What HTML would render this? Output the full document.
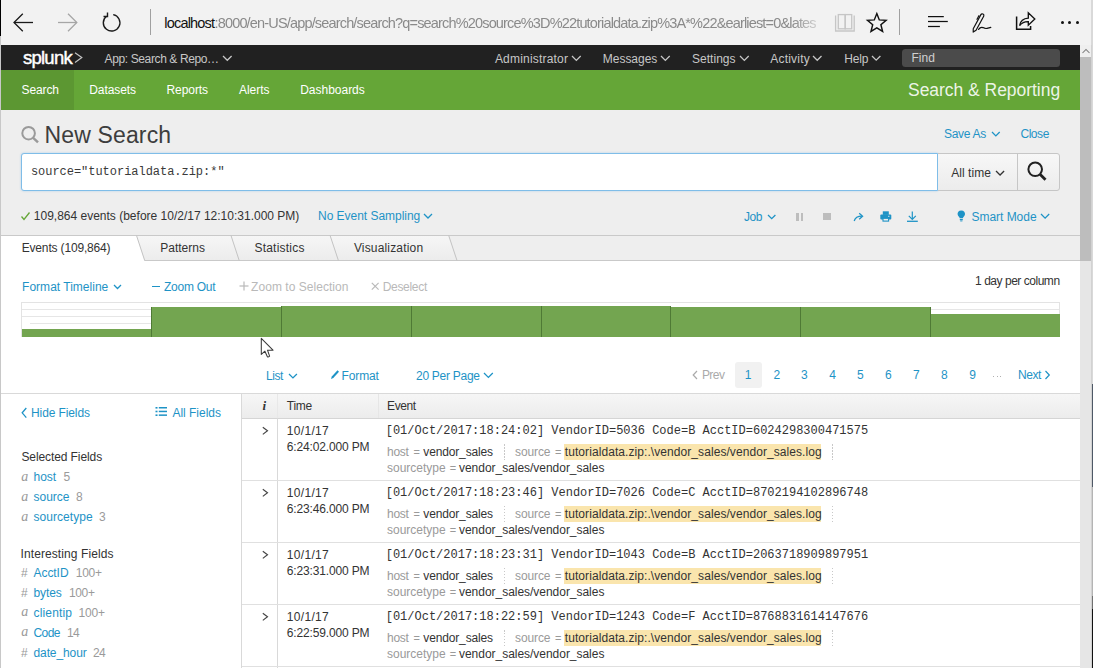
<!DOCTYPE html>
<html><head><meta charset="utf-8">
<style>
*{box-sizing:border-box;margin:0;padding:0}
html,body{width:1093px;height:668px;overflow:hidden;background:#ffffff;font-family:"Liberation Sans",sans-serif;position:relative}
.a{position:absolute}
.t{white-space:nowrap;line-height:normal}
svg.a{overflow:visible}
</style></head><body>
<div class="a" style="left:0px;top:0px;width:1093px;height:45px;background:#f2f2f2"></div>
<div class="a" style="left:0px;top:0px;width:1px;height:36px;background:#000"></div>
<div class="a" style="left:1091px;top:0px;width:2px;height:668px;background:#d9d9d9"></div>
<div class="a" style="left:0px;top:45px;width:1080px;height:25px;background:#212121"></div>
<div class="a" style="left:0px;top:70px;width:1080px;height:40px;background:#65a637"></div>
<div class="a" style="left:0px;top:70px;width:74px;height:40px;background:#5c9732"></div>
<div class="a" style="left:0px;top:110px;width:1080px;height:126px;background:#eeeeee"></div>
<div class="a" style="left:1080px;top:45px;width:11px;height:623px;background:#e6e6e6"></div>
<div class="a" style="left:1080px;top:45px;width:11px;height:12px;background:#efefef"></div>
<div class="a" style="left:1080px;top:57px;width:11px;height:204px;background:#bdbdbd"></div>
<div class="a" style="left:1091px;top:45px;width:1px;height:623px;background:#d2d2d2"></div>
<div class="a" style="left:1092px;top:384px;width:1px;height:103px;background:#4e5866"></div>
<div class="a" style="left:1092px;top:487px;width:1px;height:109px;background:#b4b4b4"></div>
<div class="a" style="left:1092px;top:596px;width:1px;height:13px;background:#707070"></div>
<div class="a" style="left:1092px;top:609px;width:1px;height:59px;background:#111"></div>
<svg class="a" style="left:1081px;top:47px" width="10" height="8"><polyline points="1.5,6 5,2.5 8.5,6" fill="none" stroke="#7a7a7a" stroke-width="1.05"/></svg>
<div class="a" style="left:150px;top:9px;width:1px;height:26px;background:#a0a0a0"></div>
<div class="a" style="left:899px;top:9px;width:1px;height:26px;background:#a0a0a0"></div>
<svg class="a" style="left:12px;top:12px" width="24" height="22"><polyline points="10.8,1.8 2,10.5 10.8,19.2" fill="none" stroke="#1a1a1a" stroke-width="1.3"/><line x1="2" y1="10.5" x2="21" y2="10.5" stroke="#1a1a1a" stroke-width="1.3"/></svg>
<svg class="a" style="left:56px;top:12px" width="24" height="22"><polyline points="12,1.8 20.8,10.5 12,19.2" fill="none" stroke="#a6a6a6" stroke-width="1.3"/><line x1="2" y1="10.5" x2="20.8" y2="10.5" stroke="#a6a6a6" stroke-width="1.3"/></svg>
<svg class="a" style="left:98.5px;top:11px" width="24" height="24"><path d="M 7.5 5.2 A 8.3 8.3 0 1 0 14.2 3.6" fill="none" stroke="#1a1a1a" stroke-width="1.4"/><polyline points="8.5,1.5 8.5,5.5 4.5,5.5" fill="none" stroke="#1a1a1a" stroke-width="1.4"/></svg>
<svg class="a" style="left:830px;top:10px" width="30" height="25"><path d="M5.6 5.5 V21 H24.2 V5.5" fill="none" stroke="#c6c6c6" stroke-width="1.3"/><rect x="8.3" y="4.6" width="6.9" height="14.2" fill="none" stroke="#c6c6c6" stroke-width="1.3"/><rect x="15.2" y="4.6" width="6.5" height="14.2" fill="none" stroke="#c6c6c6" stroke-width="1.3"/></svg>
<svg class="a" style="left:860px;top:10px" width="30" height="25"><polygon points="16.8,3.6 19.3,9.9 26.1,10.4 20.9,14.8 22.6,21.4 16.8,17.8 11,21.4 12.7,14.8 7.5,10.4 14.3,9.9" fill="none" stroke="#111" stroke-width="1.45" stroke-linejoin="miter"/></svg>
<svg class="a" style="left:920px;top:10px" width="30" height="20"><line x1="8" y1="6.6" x2="23.8" y2="6.6" stroke="#111" stroke-width="1.25"/><line x1="8" y1="11.5" x2="27.8" y2="11.5" stroke="#111" stroke-width="1.25"/><line x1="8" y1="16.5" x2="19.9" y2="16.5" stroke="#111" stroke-width="1.25"/></svg>
<svg class="a" style="left:970px;top:10px" width="24" height="22"><g transform="rotate(-61.5 4.8 19.2)"><path d="M1.5 19.2 L4.5 17.6 H20.5 Q22 17.6 22 19.2 Q22 20.8 20.5 20.8 H4.5 Z" fill="none" stroke="#111" stroke-width="1.2" stroke-linejoin="round"/><line x1="14" y1="16.4" x2="19" y2="16.4" stroke="#111" stroke-width="1.1"/></g><path d="M8.6 19.4 Q10.5 16.6 13 17.6 Q15 18.8 17 18.4 Q19 18 20.8 17.4" fill="none" stroke="#111" stroke-width="1.2" stroke-linecap="round"/></svg>
<svg class="a" style="left:1010px;top:8px" width="28" height="24"><path d="M6.6 8.5 V21.3 H20.6 V18" fill="none" stroke="#111" stroke-width="1.5"/><path d="M9.6 17.6 Q10.8 10.6 18.3 10.2 V4.8 L24.8 11.1 L18.3 17.2 V13.6 Q12.8 13.4 9.6 17.6 Z" fill="none" stroke="#111" stroke-width="1.35" stroke-linejoin="miter"/></svg>
<div class="a" style="left:1060.8px;top:20.6px;width:3px;height:3px;border-radius:50%;background:#111"></div>
<div class="a" style="left:1068.3px;top:20.6px;width:3px;height:3px;border-radius:50%;background:#111"></div>
<div class="a" style="left:1076.0px;top:20.6px;width:3px;height:3px;border-radius:50%;background:#111"></div>
<svg class="a" style="left:73px;top:51px" width="11" height="14"><polyline points="2,1.8 8.8,6.6 2,11.6" fill="none" stroke="#c4c4c4" stroke-width="1.2"/></svg>
<svg class="a" style="left:222.0px;top:54.9px" width="10.6" height="6.3"><polyline points="1,1 5.30,5.30 9.60,1" fill="none" stroke="#c7c7c7" stroke-width="1.3"/></svg>
<svg class="a" style="left:570.5px;top:54.6px" width="10.7" height="6.4"><polyline points="1,1 5.35,5.35 9.70,1" fill="none" stroke="#c7c7c7" stroke-width="1.3"/></svg>
<svg class="a" style="left:659.7px;top:54.6px" width="10.7" height="6.3"><polyline points="1,1 5.35,5.35 9.70,1" fill="none" stroke="#c7c7c7" stroke-width="1.3"/></svg>
<svg class="a" style="left:738.5px;top:54.6px" width="10.7" height="6.4"><polyline points="1,1 5.35,5.35 9.70,1" fill="none" stroke="#c7c7c7" stroke-width="1.3"/></svg>
<svg class="a" style="left:812.3px;top:54.7px" width="10.5" height="6.2"><polyline points="1,1 5.25,5.25 9.50,1" fill="none" stroke="#c7c7c7" stroke-width="1.3"/></svg>
<svg class="a" style="left:871.0px;top:54.7px" width="10.4" height="6.2"><polyline points="1,1 5.20,5.20 9.40,1" fill="none" stroke="#c7c7c7" stroke-width="1.3"/></svg>
<div class="a" style="left:902px;top:48.5px;width:158px;height:18.5px;background:#4b4b4b;border-radius:3.5px"></div>
<svg class="a" style="left:20px;top:125px" width="21" height="20"><circle cx="8.6" cy="8.2" r="6.3" fill="none" stroke="#9a9a9a" stroke-width="2"/><line x1="13.2" y1="12.8" x2="18" y2="17.4" stroke="#9a9a9a" stroke-width="2.4"/></svg>
<svg class="a" style="left:990.6px;top:130.6px" width="9.7" height="5.8"><polyline points="1,1 4.85,4.85 8.70,1" fill="none" stroke="#1e93c6" stroke-width="1.3"/></svg>
<div class="a" style="left:21px;top:153px;width:917px;height:37.5px;background:#fff;border:1px solid #7fbde8;border-radius:3px 0 0 3px;box-shadow:0 0 2px rgba(80,160,230,.45)"></div>
<div class="a" style="left:938px;top:153px;width:80px;height:37.5px;background:linear-gradient(#f7f7f7,#ececec);border:1px solid #c6c6c6;border-left:none"></div>
<div class="a" style="left:1017px;top:153px;width:43px;height:37.5px;background:linear-gradient(#f7f7f7,#ececec);border:1px solid #c6c6c6;border-radius:0 3px 3px 0"></div>
<svg class="a" style="left:994.6px;top:169.5px" width="10.1" height="6.1"><polyline points="1,1 5.05,5.05 9.10,1" fill="none" stroke="#333333" stroke-width="1.3"/></svg>
<svg class="a" style="left:1026px;top:160px" width="23" height="23"><circle cx="9.2" cy="9.3" r="6.8" fill="none" stroke="#222" stroke-width="2"/><line x1="14" y1="14.2" x2="19.5" y2="19.8" stroke="#222" stroke-width="2.8"/></svg>
<svg class="a" style="left:20px;top:211px" width="11" height="10"><polyline points="1.5,5.5 4,8.5 9.5,1.5" fill="none" stroke="#65a637" stroke-width="1.3"/></svg>
<svg class="a" style="left:423.0px;top:213.0px" width="10.0" height="6.0"><polyline points="1,1 5.00,5.00 9.00,1" fill="none" stroke="#1e93c6" stroke-width="1.3"/></svg>
<svg class="a" style="left:767.4px;top:213.7px" width="9.4" height="5.7"><polyline points="1,1 4.70,4.70 8.40,1" fill="none" stroke="#1e93c6" stroke-width="1.3"/></svg>
<div class="a" style="left:796.3px;top:212.5px;width:2.6px;height:8px;background:#bdbdbd"></div>
<div class="a" style="left:800.5px;top:212.5px;width:2.6px;height:8px;background:#bdbdbd"></div>
<div class="a" style="left:822.8px;top:212.6px;width:7.8px;height:7.8px;background:#bdbdbd"></div>
<svg class="a" style="left:853px;top:212px" width="12" height="10"><path d="M1.2 9 Q2.5 4.2 9 4.2" fill="none" stroke="#1e93c6" stroke-width="1.25"/><polyline points="6.2,1.2 9.6,4.2 6.2,7.2" fill="none" stroke="#1e93c6" stroke-width="1.25"/></svg>
<svg class="a" style="left:880px;top:211px" width="12" height="11"><rect x="2.8" y="0.3" width="6" height="3.6" fill="#1e93c6"/><rect x="0.3" y="3.6" width="11" height="5" rx="1" fill="#1e93c6"/><rect x="3" y="7.3" width="5.6" height="2.8" fill="#eeeeee" stroke="#1e93c6" stroke-width="1.1"/><rect x="8.2" y="4.8" width="1.2" height="1" fill="#eeeeee"/></svg>
<svg class="a" style="left:906px;top:211px" width="13" height="12"><line x1="6.3" y1="0.5" x2="6.3" y2="8" stroke="#1e93c6" stroke-width="1.2"/><polyline points="2.8,4.8 6.3,8.3 9.8,4.8" fill="none" stroke="#1e93c6" stroke-width="1.2"/><line x1="1" y1="10.3" x2="11.8" y2="10.3" stroke="#1e93c6" stroke-width="1.3"/></svg>
<svg class="a" style="left:957px;top:210px" width="9" height="12"><path d="M4.3 0.5 C1.5 0.5 0.4 2.6 0.6 4.2 C0.8 6 2.6 6.8 2.7 8.2 H5.9 C6 6.8 7.8 6 8 4.2 C8.2 2.6 7 0.5 4.3 0.5 Z" fill="#1e93c6"/><rect x="2.8" y="9" width="3" height="1.2" fill="#1e93c6"/><rect x="3.2" y="10.5" width="2.2" height="0.9" fill="#1e93c6"/></svg>
<svg class="a" style="left:1040.0px;top:213.2px" width="10.2" height="6.1"><polyline points="1,1 5.10,5.10 9.20,1" fill="none" stroke="#1e93c6" stroke-width="1.3"/></svg>
<div class="a" style="left:0px;top:235px;width:1080px;height:26px;background:#eeeeee"></div>
<div class="a" style="left:0px;top:235px;width:1080px;height:1px;background:#c9c9c9"></div>
<div class="a" style="left:0px;top:260px;width:1080px;height:1px;background:#c9c9c9"></div>
<svg class="a" style="left:0;top:235px" width="470" height="26">
<defs><linearGradient id="tg" x1="0" y1="0" x2="0" y2="1"><stop offset="0" stop-color="#f6f6f6"/><stop offset="1" stop-color="#ececec"/></linearGradient></defs>
<polygon points="136.5,0.5 231,0.5 239.2,25.5 144.7,25.5" fill="url(#tg)"/>
<polygon points="231,0.5 330.1,0.5 338.4,25.5 239.2,25.5" fill="url(#tg)"/>
<polygon points="330.1,0.5 448.7,0.5 457,25.5 338.4,25.5" fill="url(#tg)"/>
<polygon points="0,0 136.5,0 144.7,26 0,26" fill="#ffffff"/>
<line x1="0" y1="0.5" x2="470" y2="0.5" stroke="#c9c9c9" stroke-width="1"/>
<line x1="144.7" y1="25.5" x2="470" y2="25.5" stroke="#c9c9c9" stroke-width="1"/>
<line x1="136.5" y1="0.5" x2="144.7" y2="25.5" stroke="#c3c3c3" stroke-width="1"/>
<line x1="231" y1="0.5" x2="239.2" y2="25.5" stroke="#c3c3c3" stroke-width="1"/>
<line x1="330.1" y1="0.5" x2="338.4" y2="25.5" stroke="#c3c3c3" stroke-width="1"/>
<line x1="448.7" y1="0.5" x2="457" y2="25.5" stroke="#c3c3c3" stroke-width="1"/>
</svg>
<svg class="a" style="left:113.0px;top:283.8px" width="9.0" height="5.5"><polyline points="1,1 4.50,4.50 8.00,1" fill="none" stroke="#1e93c6" stroke-width="1.3"/></svg>
<div class="a" style="left:151.8px;top:285.6px;width:8.6px;height:1.3px;background:#1e93c6"></div>
<svg class="a" style="left:239px;top:281px" width="11" height="11"><line x1="5" y1="0.5" x2="5" y2="9.5" stroke="#b9b9b9" stroke-width="1.2"/><line x1="0.5" y1="5" x2="9.5" y2="5" stroke="#b9b9b9" stroke-width="1.2"/></svg>
<svg class="a" style="left:371px;top:282px" width="9" height="9"><line x1="0.8" y1="0.8" x2="7.6" y2="7.6" stroke="#b9b9b9" stroke-width="1.2"/><line x1="7.6" y1="0.8" x2="0.8" y2="7.6" stroke="#b9b9b9" stroke-width="1.2"/></svg>
<div class="a" style="left:21px;top:302px;width:1039px;height:35px;border:1px solid #e3e3e3;border-bottom:none;background:#fff"></div>
<div class="a" style="left:22px;top:309px;width:1037px;height:1px;background:#e6e6e6"></div>
<div class="a" style="left:22px;top:316px;width:1037px;height:1px;background:#e6e6e6"></div>
<div class="a" style="left:30px;top:323px;width:1029px;height:1px;background:#e6e6e6"></div>
<div class="a" style="left:21.5px;top:329px;width:129.9px;height:7.8px;background:#73a550"></div>
<div class="a" style="left:151.4px;top:307px;width:129.9px;height:29.8px;background:#73a550"></div>
<div class="a" style="left:281.3px;top:306px;width:130.2px;height:30.8px;background:#73a550"></div>
<div class="a" style="left:411.5px;top:306px;width:130.0px;height:30.8px;background:#73a550"></div>
<div class="a" style="left:541.5px;top:305.5px;width:128.9px;height:31.3px;background:#73a550"></div>
<div class="a" style="left:670.4px;top:306.8px;width:130.0px;height:30.0px;background:#73a550"></div>
<div class="a" style="left:800.4px;top:307.3px;width:129.9px;height:29.5px;background:#73a550"></div>
<div class="a" style="left:930.3px;top:314px;width:129.5px;height:22.8px;background:#73a550"></div>
<div class="a" style="left:150.9px;top:307px;width:1px;height:29.8px;background:#4f7a35"></div>
<div class="a" style="left:280.8px;top:306px;width:1px;height:30.8px;background:#4f7a35"></div>
<div class="a" style="left:411.0px;top:306px;width:1px;height:30.8px;background:#4f7a35"></div>
<div class="a" style="left:541.0px;top:305.5px;width:1px;height:31.3px;background:#4f7a35"></div>
<div class="a" style="left:669.9px;top:305.5px;width:1px;height:31.3px;background:#4f7a35"></div>
<div class="a" style="left:799.9px;top:306.8px;width:1px;height:30.0px;background:#4f7a35"></div>
<div class="a" style="left:929.8px;top:307.3px;width:1px;height:29.5px;background:#4f7a35"></div>
<svg class="a" style="left:260px;top:337px" width="16" height="22"><path d="M1.3 1.3 V17.4 L4.9 14.2 L7.4 19.7 Q8.3 20.3 9.6 19.2 L7.5 13.2 H13 Z" fill="#fff" stroke="#3a3a3a" stroke-width="1.05" stroke-linejoin="round"/></svg>
<svg class="a" style="left:288.2px;top:372.5px" width="9.9" height="6.0"><polyline points="1,1 4.95,4.95 8.90,1" fill="none" stroke="#1e93c6" stroke-width="1.3"/></svg>
<svg class="a" style="left:330px;top:369px" width="10" height="11"><path d="M1 10 L1.8 7.5 L7.5 1.2 L9 2.7 L3.3 9 Z" fill="#1e93c6"/></svg>
<svg class="a" style="left:483.3px;top:372.3px" width="10.8" height="6.4"><polyline points="1,1 5.40,5.40 9.80,1" fill="none" stroke="#1e93c6" stroke-width="1.3"/></svg>
<svg class="a" style="left:692px;top:370px" width="7" height="11"><polyline points="5,1 1.2,5 5,9" fill="none" stroke="#aaaaaa" stroke-width="1.2"/></svg>
<div class="a" style="left:735px;top:362px;width:27px;height:26px;background:#f1f1f1;border-radius:3px"></div>
<div class="a" style="left:993.0px;top:375.5px;width:1px;height:1px;background:#b0b0b0"></div>
<div class="a" style="left:996.7px;top:375.5px;width:1px;height:1px;background:#b0b0b0"></div>
<div class="a" style="left:1000.4px;top:375.5px;width:1px;height:1px;background:#b0b0b0"></div>
<svg class="a" style="left:1044px;top:370px" width="7" height="11"><polyline points="1.5,1 5.3,5 1.5,9" fill="none" stroke="#1e93c6" stroke-width="1.2"/></svg>
<div class="a" style="left:0px;top:393px;width:1080px;height:1px;background:#d9d9d9"></div>
<svg class="a" style="left:21px;top:407px" width="7" height="12"><polyline points="5.3,1 1.2,5.8 5.3,10.6" fill="none" stroke="#1e93c6" stroke-width="1.3"/></svg>
<svg class="a" style="left:155px;top:406px" width="13" height="11"><g fill="#1e93c6"><rect x="0.5" y="1" width="2" height="1.6"/><rect x="0.5" y="4.7" width="2" height="1.6"/><rect x="0.5" y="8.4" width="2" height="1.6"/><rect x="3.8" y="1" width="8.2" height="1.5"/><rect x="3.8" y="4.7" width="8.2" height="1.5"/><rect x="3.8" y="8.4" width="8.2" height="1.5"/></g></svg>
<div class="a" style="left:241px;top:393px;width:1px;height:275px;background:#d9d9d9"></div>
<div class="a" style="left:242px;top:394px;width:838px;height:24px;background:linear-gradient(#f6f6f6,#ececec)"></div>
<div class="a" style="left:242px;top:418px;width:838px;height:1px;background:#d5d5d5"></div>
<div class="a" style="left:277px;top:394px;width:1px;height:24px;background:#e8e8e8"></div>
<div class="a" style="left:277px;top:418px;width:1px;height:250px;background:#d9d9d9"></div>
<div class="a" style="left:378px;top:394px;width:1px;height:24px;background:#e6e6e6"></div>
<div class="a" style="left:242px;top:480px;width:838px;height:1px;background:#e0e0e0"></div>
<svg class="a" style="left:261px;top:426px" width="9" height="10"><polyline points="1.8,1.2 6.5,4.8 1.8,8.4" fill="none" stroke="#444" stroke-width="1.15"/></svg>
<div class="a" style="left:503.5px;top:444px;width:1px;height:16px;background:repeating-linear-gradient(#c8c8c8 0 1.5px,transparent 1.5px 3px)"></div>
<div class="a" style="left:831.5px;top:444px;width:1px;height:16px;background:repeating-linear-gradient(#c8c8c8 0 1.5px,transparent 1.5px 3px)"></div>
<div class="a" style="left:564px;top:444.2px;width:257.4px;height:15.4px;background:#fae5ad"></div>
<div class="a" style="left:242px;top:542px;width:838px;height:1px;background:#e0e0e0"></div>
<svg class="a" style="left:261px;top:488px" width="9" height="10"><polyline points="1.8,1.2 6.5,4.8 1.8,8.4" fill="none" stroke="#444" stroke-width="1.15"/></svg>
<div class="a" style="left:503.5px;top:506px;width:1px;height:16px;background:repeating-linear-gradient(#c8c8c8 0 1.5px,transparent 1.5px 3px)"></div>
<div class="a" style="left:831.5px;top:506px;width:1px;height:16px;background:repeating-linear-gradient(#c8c8c8 0 1.5px,transparent 1.5px 3px)"></div>
<div class="a" style="left:564px;top:506.2px;width:257.4px;height:15.4px;background:#fae5ad"></div>
<div class="a" style="left:242px;top:604px;width:838px;height:1px;background:#e0e0e0"></div>
<svg class="a" style="left:261px;top:550px" width="9" height="10"><polyline points="1.8,1.2 6.5,4.8 1.8,8.4" fill="none" stroke="#444" stroke-width="1.15"/></svg>
<div class="a" style="left:503.5px;top:568px;width:1px;height:16px;background:repeating-linear-gradient(#c8c8c8 0 1.5px,transparent 1.5px 3px)"></div>
<div class="a" style="left:831.5px;top:568px;width:1px;height:16px;background:repeating-linear-gradient(#c8c8c8 0 1.5px,transparent 1.5px 3px)"></div>
<div class="a" style="left:564px;top:568.2px;width:257.4px;height:15.4px;background:#fae5ad"></div>
<div class="a" style="left:242px;top:666px;width:838px;height:1px;background:#e0e0e0"></div>
<svg class="a" style="left:261px;top:612px" width="9" height="10"><polyline points="1.8,1.2 6.5,4.8 1.8,8.4" fill="none" stroke="#444" stroke-width="1.15"/></svg>
<div class="a" style="left:503.5px;top:630px;width:1px;height:16px;background:repeating-linear-gradient(#c8c8c8 0 1.5px,transparent 1.5px 3px)"></div>
<div class="a" style="left:831.5px;top:630px;width:1px;height:16px;background:repeating-linear-gradient(#c8c8c8 0 1.5px,transparent 1.5px 3px)"></div>
<div class="a" style="left:564px;top:630.2px;width:257.4px;height:15.4px;background:#fae5ad"></div>
<div class="a" style="left:0px;top:36px;width:1px;height:632px;background:#c8c8c8"></div>
<div class="a t" style="left:164.30px;top:15px;font-size:14.5px;color:#111;letter-spacing:-0.812px">localhost</div>
<div class="a t" style="left:214.50px;top:15px;font-size:14.5px;color:#8a8a8a;letter-spacing:-0.833px;-webkit-mask-image:linear-gradient(to right,#000 96%,rgba(0,0,0,.35) 100%)">:8000/en-US/app/search/search?q=search%20source%3D%22tutorialdata.zip%3A*%22&amp;earliest=0&amp;lates</div>
<div class="a t" style="left:22.90px;top:47px;font-size:18.5px;color:#ffffff;letter-spacing:-0.725px;-webkit-text-stroke:0.45px #fff">splunk</div>
<div class="a t" style="left:104.60px;top:52px;font-size:12px;color:#c7c7c7;letter-spacing:-0.383px">App: Search &amp; Repo…</div>
<div class="a t" style="left:494.90px;top:52px;font-size:12px;color:#c7c7c7;letter-spacing:0.201px">Administrator</div>
<div class="a t" style="left:602.80px;top:52px;font-size:12px;color:#c7c7c7;letter-spacing:-0.027px">Messages</div>
<div class="a t" style="left:691.90px;top:52px;font-size:12px;color:#c7c7c7;letter-spacing:0.049px">Settings</div>
<div class="a t" style="left:770.30px;top:52px;font-size:12px;color:#c7c7c7;letter-spacing:0.199px">Activity</div>
<div class="a t" style="left:844.20px;top:52px;font-size:12px;color:#c7c7c7;letter-spacing:-0.169px">Help</div>
<div class="a t" style="left:911.40px;top:51px;font-size:12px;color:#d0d0d0;letter-spacing:0.043px">Find</div>
<div class="a t" style="left:21.50px;top:83px;font-size:12px;color:#ffffff;letter-spacing:-0.110px">Search</div>
<div class="a t" style="left:89.20px;top:83px;font-size:12px;color:#ffffff;letter-spacing:-0.065px">Datasets</div>
<div class="a t" style="left:166.50px;top:83px;font-size:12px;color:#ffffff;letter-spacing:-0.070px">Reports</div>
<div class="a t" style="left:238.90px;top:83px;font-size:12px;color:#ffffff;letter-spacing:-0.015px">Alerts</div>
<div class="a t" style="left:300.20px;top:83px;font-size:12px;color:#ffffff;letter-spacing:-0.012px">Dashboards</div>
<div class="a t" style="left:908.00px;top:80px;font-size:17.5px;color:rgba(255,255,255,0.9);letter-spacing:-0.035px">Search &amp; Reporting</div>
<div class="a t" style="left:44.60px;top:122px;font-size:23px;color:#3d3d3d;letter-spacing:0.135px">New Search</div>
<div class="a t" style="left:944.00px;top:127px;font-size:12px;color:#1e93c6;letter-spacing:-0.298px">Save As</div>
<div class="a t" style="left:1020.40px;top:127px;font-size:12px;color:#1e93c6;letter-spacing:-0.426px">Close</div>
<div class="a t" style="left:30.90px;top:165px;font-size:12px;color:#3a3a3a;font-family:'Liberation Mono';letter-spacing:-0.028px">source=&quot;tutorialdata.zip:*&quot;</div>
<div class="a t" style="left:951.20px;top:166px;font-size:12px;color:#333333;letter-spacing:0.062px">All time</div>
<div class="a t" style="left:33.80px;top:209px;font-size:12px;color:#333333">109,864 events (before 10/2/17 12:10:31.000 PM)</div>
<div class="a t" style="left:318.00px;top:209px;font-size:12px;color:#1e93c6;letter-spacing:-0.028px">No Event Sampling</div>
<div class="a t" style="left:744.00px;top:210px;font-size:12px;color:#1e93c6;letter-spacing:-0.437px">Job</div>
<div class="a t" style="left:971.50px;top:210px;font-size:12px;color:#1e93c6;letter-spacing:-0.031px">Smart Mode</div>
<div class="a t" style="left:21.70px;top:241px;font-size:12px;color:#333333;letter-spacing:-0.166px">Events (109,864)</div>
<div class="a t" style="left:160.20px;top:241px;font-size:12px;color:#333333;letter-spacing:0.016px">Patterns</div>
<div class="a t" style="left:254.40px;top:241px;font-size:12px;color:#333333;letter-spacing:0.232px">Statistics</div>
<div class="a t" style="left:353.90px;top:241px;font-size:12px;color:#333333;letter-spacing:0.168px">Visualization</div>
<div class="a t" style="left:22.10px;top:280px;font-size:12px;color:#1e93c6;letter-spacing:0.010px">Format Timeline</div>
<div class="a t" style="left:163.90px;top:280px;font-size:12px;color:#1e93c6;letter-spacing:-0.231px">Zoom Out</div>
<div class="a t" style="left:251.10px;top:280px;font-size:12px;color:#b9b9b9;letter-spacing:0.041px">Zoom to Selection</div>
<div class="a t" style="left:382.70px;top:280px;font-size:12px;color:#b9b9b9;letter-spacing:-0.308px">Deselect</div>
<div class="a t" style="left:975.10px;top:274px;font-size:12px;color:#333333;letter-spacing:-0.472px">1 day per column</div>
<div class="a t" style="left:265.90px;top:369px;font-size:12px;color:#1e93c6;letter-spacing:-0.413px">List</div>
<div class="a t" style="left:341.60px;top:369px;font-size:12px;color:#1e93c6;letter-spacing:-0.134px">Format</div>
<div class="a t" style="left:416.00px;top:369px;font-size:12px;color:#1e93c6;letter-spacing:-0.274px">20 Per Page</div>
<div class="a t" style="left:701.90px;top:368px;font-size:12px;color:#aaaaaa;letter-spacing:-0.525px">Prev</div>
<div class="a t" style="left:744.80px;top:368px;font-size:12px;color:#1e93c6">1</div>
<div class="a t" style="left:773.60px;top:368px;font-size:12px;color:#1e93c6">2</div>
<div class="a t" style="left:801.10px;top:368px;font-size:12px;color:#1e93c6">3</div>
<div class="a t" style="left:829.30px;top:368px;font-size:12px;color:#1e93c6">4</div>
<div class="a t" style="left:857.00px;top:368px;font-size:12px;color:#1e93c6">5</div>
<div class="a t" style="left:885.00px;top:368px;font-size:12px;color:#1e93c6">6</div>
<div class="a t" style="left:913.00px;top:368px;font-size:12px;color:#1e93c6">7</div>
<div class="a t" style="left:941.00px;top:368px;font-size:12px;color:#1e93c6">8</div>
<div class="a t" style="left:969.20px;top:368px;font-size:12px;color:#1e93c6">9</div>
<div class="a t" style="left:1017.90px;top:368px;font-size:12px;color:#1e93c6;letter-spacing:-0.413px">Next</div>
<div class="a t" style="left:31.00px;top:406px;font-size:12px;color:#1e93c6;letter-spacing:-0.102px">Hide Fields</div>
<div class="a t" style="left:172.40px;top:406px;font-size:12px;color:#1e93c6;letter-spacing:-0.009px">All Fields</div>
<div class="a t" style="left:21.40px;top:450px;font-size:12px;color:#333333;letter-spacing:-0.089px">Selected Fields</div>
<div class="a t" style="left:20.50px;top:547px;font-size:12px;color:#333333;letter-spacing:0.095px">Interesting Fields</div>
<div class="a t" style="left:21.20px;top:469px;font-size:14px;color:#9a9a9a;font-family:'Liberation Serif';font-style:italic">a</div>
<div class="a t" style="left:33.50px;top:470px;font-size:12px;color:#1e93c6;letter-spacing:-0.016px">host</div>
<div class="a t" style="left:63.40px;top:470px;font-size:12px;color:#9a9a9a">5</div>
<div class="a t" style="left:21.20px;top:489px;font-size:14px;color:#9a9a9a;font-family:'Liberation Serif';font-style:italic">a</div>
<div class="a t" style="left:33.50px;top:490px;font-size:12px;color:#1e93c6;letter-spacing:-0.009px">source</div>
<div class="a t" style="left:76.10px;top:490px;font-size:12px;color:#9a9a9a">8</div>
<div class="a t" style="left:21.20px;top:509px;font-size:14px;color:#9a9a9a;font-family:'Liberation Serif';font-style:italic">a</div>
<div class="a t" style="left:33.50px;top:510px;font-size:12px;color:#1e93c6;letter-spacing:0.042px">sourcetype</div>
<div class="a t" style="left:99.00px;top:510px;font-size:12px;color:#9a9a9a">3</div>
<div class="a t" style="left:21.10px;top:566px;font-size:12px;color:#9a9a9a">#</div>
<div class="a t" style="left:33.50px;top:566px;font-size:12px;color:#1e93c6;letter-spacing:-0.054px">AcctID</div>
<div class="a t" style="left:75.80px;top:566px;font-size:12px;color:#9a9a9a;letter-spacing:-0.274px">100+</div>
<div class="a t" style="left:21.10px;top:586px;font-size:12px;color:#9a9a9a">#</div>
<div class="a t" style="left:33.50px;top:586px;font-size:12px;color:#1e93c6;letter-spacing:-0.095px">bytes</div>
<div class="a t" style="left:68.90px;top:586px;font-size:12px;color:#9a9a9a;letter-spacing:-0.307px">100+</div>
<div class="a t" style="left:21.20px;top:604px;font-size:14px;color:#9a9a9a;font-family:'Liberation Serif';font-style:italic">a</div>
<div class="a t" style="left:33.50px;top:606px;font-size:12px;color:#1e93c6;letter-spacing:0.160px">clientip</div>
<div class="a t" style="left:78.60px;top:606px;font-size:12px;color:#9a9a9a;letter-spacing:-0.240px">100+</div>
<div class="a t" style="left:21.20px;top:624px;font-size:14px;color:#9a9a9a;font-family:'Liberation Serif';font-style:italic">a</div>
<div class="a t" style="left:33.50px;top:626px;font-size:12px;color:#1e93c6;letter-spacing:-0.571px">Code</div>
<div class="a t" style="left:67.10px;top:626px;font-size:12px;color:#9a9a9a;letter-spacing:-0.774px">14</div>
<div class="a t" style="left:21.10px;top:646px;font-size:12px;color:#9a9a9a">#</div>
<div class="a t" style="left:33.50px;top:646px;font-size:12px;color:#1e93c6;letter-spacing:-0.106px">date_hour</div>
<div class="a t" style="left:93.00px;top:646px;font-size:12px;color:#9a9a9a;letter-spacing:-0.774px">24</div>
<div class="a t" style="left:262.60px;top:398px;font-size:13px;color:#333;font-weight:bold;font-family:'Liberation Serif';font-style:italic">i</div>
<div class="a t" style="left:286.80px;top:399px;font-size:12px;color:#333333;letter-spacing:-0.282px">Time</div>
<div class="a t" style="left:387.10px;top:399px;font-size:12px;color:#333333;letter-spacing:-0.413px">Event</div>
<div class="a t" style="left:286.80px;top:424px;font-size:12px;color:#333333;letter-spacing:0.306px">10/1/17</div>
<div class="a t" style="left:286.80px;top:440px;font-size:12px;color:#333333;letter-spacing:-0.148px">6:24:02.000 PM</div>
<div class="a t" style="left:385.70px;top:424px;font-size:12px;color:#333333;font-family:'Liberation Mono'">[01/Oct/2017:18:24:02] VendorID=5036 Code=B AcctID=6024298300471575</div>
<div class="a t" style="left:387.00px;top:445px;font-size:12px;color:#9a9a9a;letter-spacing:-0.249px">host</div>
<div class="a t" style="left:413.40px;top:446px;font-size:11px;color:#9a9a9a">=</div>
<div class="a t" style="left:423.30px;top:445px;font-size:12px;color:#333333;letter-spacing:-0.144px">vendor_sales</div>
<div class="a t" style="left:515.00px;top:445px;font-size:12px;color:#9a9a9a;letter-spacing:-0.109px">source</div>
<div class="a t" style="left:555.00px;top:446px;font-size:11px;color:#9a9a9a">=</div>
<div class="a t" style="left:564.80px;top:445px;font-size:12px;color:#333333;letter-spacing:0.072px">tutorialdata.zip:.\vendor_sales/vendor_sales.log</div>
<div class="a t" style="left:387.00px;top:461px;font-size:12px;color:#9a9a9a;letter-spacing:-0.014px">sourcetype</div>
<div class="a t" style="left:449.80px;top:462px;font-size:11px;color:#9a9a9a">=</div>
<div class="a t" style="left:459.00px;top:461px;font-size:12px;color:#333333;letter-spacing:-0.029px">vendor_sales/vendor_sales</div>
<div class="a t" style="left:286.80px;top:486px;font-size:12px;color:#333333;letter-spacing:0.306px">10/1/17</div>
<div class="a t" style="left:286.80px;top:502px;font-size:12px;color:#333333;letter-spacing:-0.148px">6:23:46.000 PM</div>
<div class="a t" style="left:385.70px;top:486px;font-size:12px;color:#333333;font-family:'Liberation Mono'">[01/Oct/2017:18:23:46] VendorID=7026 Code=C AcctID=8702194102896748</div>
<div class="a t" style="left:387.00px;top:507px;font-size:12px;color:#9a9a9a;letter-spacing:-0.249px">host</div>
<div class="a t" style="left:413.40px;top:508px;font-size:11px;color:#9a9a9a">=</div>
<div class="a t" style="left:423.30px;top:507px;font-size:12px;color:#333333;letter-spacing:-0.144px">vendor_sales</div>
<div class="a t" style="left:515.00px;top:507px;font-size:12px;color:#9a9a9a;letter-spacing:-0.109px">source</div>
<div class="a t" style="left:555.00px;top:508px;font-size:11px;color:#9a9a9a">=</div>
<div class="a t" style="left:564.80px;top:507px;font-size:12px;color:#333333;letter-spacing:0.072px">tutorialdata.zip:.\vendor_sales/vendor_sales.log</div>
<div class="a t" style="left:387.00px;top:523px;font-size:12px;color:#9a9a9a;letter-spacing:-0.014px">sourcetype</div>
<div class="a t" style="left:449.80px;top:524px;font-size:11px;color:#9a9a9a">=</div>
<div class="a t" style="left:459.00px;top:523px;font-size:12px;color:#333333;letter-spacing:-0.029px">vendor_sales/vendor_sales</div>
<div class="a t" style="left:286.80px;top:548px;font-size:12px;color:#333333;letter-spacing:0.306px">10/1/17</div>
<div class="a t" style="left:286.80px;top:564px;font-size:12px;color:#333333;letter-spacing:-0.148px">6:23:31.000 PM</div>
<div class="a t" style="left:385.70px;top:548px;font-size:12px;color:#333333;font-family:'Liberation Mono'">[01/Oct/2017:18:23:31] VendorID=1043 Code=B AcctID=2063718909897951</div>
<div class="a t" style="left:387.00px;top:569px;font-size:12px;color:#9a9a9a;letter-spacing:-0.249px">host</div>
<div class="a t" style="left:413.40px;top:570px;font-size:11px;color:#9a9a9a">=</div>
<div class="a t" style="left:423.30px;top:569px;font-size:12px;color:#333333;letter-spacing:-0.144px">vendor_sales</div>
<div class="a t" style="left:515.00px;top:569px;font-size:12px;color:#9a9a9a;letter-spacing:-0.109px">source</div>
<div class="a t" style="left:555.00px;top:570px;font-size:11px;color:#9a9a9a">=</div>
<div class="a t" style="left:564.80px;top:569px;font-size:12px;color:#333333;letter-spacing:0.072px">tutorialdata.zip:.\vendor_sales/vendor_sales.log</div>
<div class="a t" style="left:387.00px;top:585px;font-size:12px;color:#9a9a9a;letter-spacing:-0.014px">sourcetype</div>
<div class="a t" style="left:449.80px;top:586px;font-size:11px;color:#9a9a9a">=</div>
<div class="a t" style="left:459.00px;top:585px;font-size:12px;color:#333333;letter-spacing:-0.029px">vendor_sales/vendor_sales</div>
<div class="a t" style="left:286.80px;top:610px;font-size:12px;color:#333333;letter-spacing:0.306px">10/1/17</div>
<div class="a t" style="left:286.80px;top:626px;font-size:12px;color:#333333;letter-spacing:-0.148px">6:22:59.000 PM</div>
<div class="a t" style="left:385.70px;top:610px;font-size:12px;color:#333333;font-family:'Liberation Mono'">[01/Oct/2017:18:22:59] VendorID=1243 Code=F AcctID=8768831614147676</div>
<div class="a t" style="left:387.00px;top:631px;font-size:12px;color:#9a9a9a;letter-spacing:-0.249px">host</div>
<div class="a t" style="left:413.40px;top:632px;font-size:11px;color:#9a9a9a">=</div>
<div class="a t" style="left:423.30px;top:631px;font-size:12px;color:#333333;letter-spacing:-0.144px">vendor_sales</div>
<div class="a t" style="left:515.00px;top:631px;font-size:12px;color:#9a9a9a;letter-spacing:-0.109px">source</div>
<div class="a t" style="left:555.00px;top:632px;font-size:11px;color:#9a9a9a">=</div>
<div class="a t" style="left:564.80px;top:631px;font-size:12px;color:#333333;letter-spacing:0.072px">tutorialdata.zip:.\vendor_sales/vendor_sales.log</div>
<div class="a t" style="left:387.00px;top:647px;font-size:12px;color:#9a9a9a;letter-spacing:-0.014px">sourcetype</div>
<div class="a t" style="left:449.80px;top:648px;font-size:11px;color:#9a9a9a">=</div>
<div class="a t" style="left:459.00px;top:647px;font-size:12px;color:#333333;letter-spacing:-0.029px">vendor_sales/vendor_sales</div>
</body></html>
